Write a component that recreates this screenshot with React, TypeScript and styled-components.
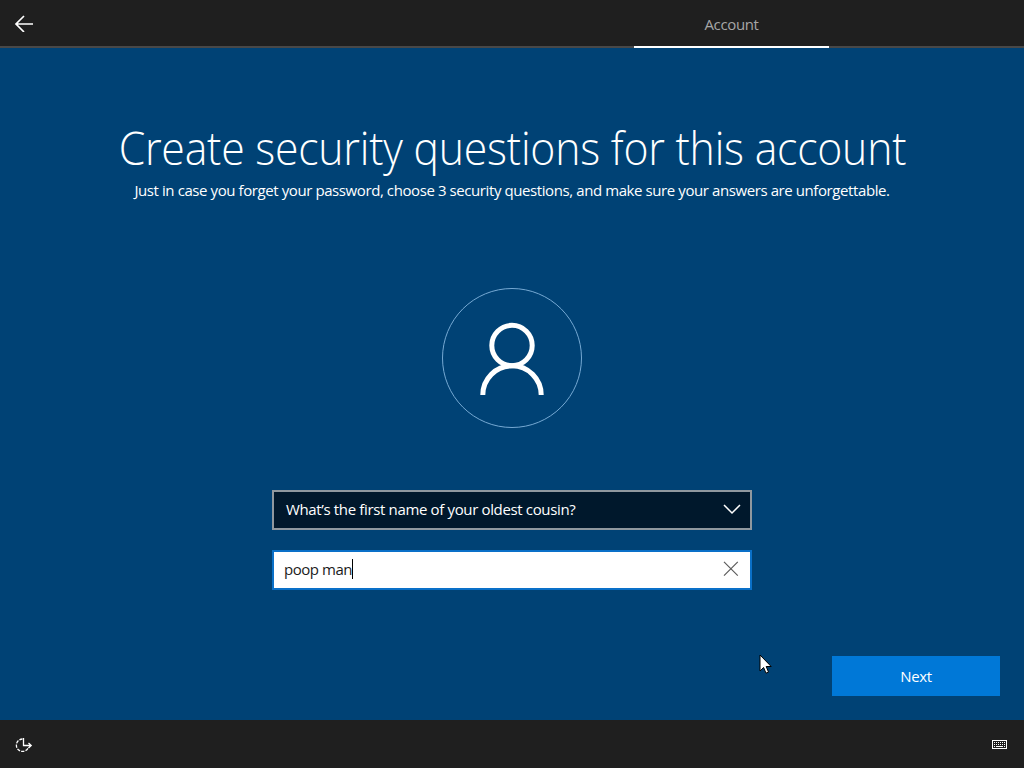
import React from 'react';
import styled, { createGlobalStyle } from 'styled-components';

const GlobalStyle = createGlobalStyle`
  * { box-sizing: border-box; }
  body {
    margin: 0;
    background: #004275;
    font-family: 'Open Sans', 'Noto Sans', sans-serif;
    font-size: 15px;
    letter-spacing: -0.35px;
    color: #fff;
    overflow: hidden;
  }
`;

const Screen = styled.div`
  width: 1024px;
  height: 768px;
  display: flex;
  flex-direction: column;
  background: #004275;
`;

const TopBar = styled.header`
  height: 48px;
  flex: none;
  display: flex;
  justify-content: space-between;
  background: #1f1f1f;
  border-bottom: 2px solid #484848;
`;

const BackButton = styled.button`
  width: 48px;
  height: 46px;
  padding: 0;
  border: 0;
  background: none;
  display: flex;
  align-items: center;
  justify-content: center;
`;

const Tab = styled.div`
  width: 195px;
  height: 48px;
  margin-right: 195px;
  padding-top: 14px;
  border-bottom: 2px solid #fff;
  text-align: center;
  line-height: 20px;
  color: #a6a6a6;
`;

const Content = styled.main`
  flex: 1;
  display: flex;
  flex-direction: column;
  align-items: center;
  padding: 67px 24px 24px;
`;

const Title = styled.h1`
  margin: 0;
  font-size: 46px;
  font-weight: 300;
  line-height: 64px;
  letter-spacing: -0.25px;
  white-space: nowrap;
  transform: scaleX(0.93);
`;

const Subtitle = styled.p`
  margin: 0;
  padding-top: 1px;
  line-height: 20px;
  letter-spacing: -0.41px;
  white-space: nowrap;
`;

const Avatar = styled.div`
  width: 140px;
  height: 140px;
  margin-top: 88px;
  border: 1px solid #76a9d3;
  border-radius: 50%;
`;

const Form = styled.form`
  width: 480px;
  margin-top: 62px;
  display: flex;
  flex-direction: column;
  gap: 20px;
`;

const Field = styled.div<{ $kind: 'select' | 'input' }>`
  height: 40px;
  display: flex;
  align-items: center;
  justify-content: space-between;
  padding: 0 9px 2px ${p => (p.$kind === 'select' ? 12 : 10)}px;
  border: 2px solid ${p => (p.$kind === 'select' ? '#8f989f' : '#0a70c8')};
  background: ${p => (p.$kind === 'select' ? '#00182c' : '#fff')};
  color: ${p => (p.$kind === 'select' ? '#fff' : '#1b1b1b')};
  letter-spacing: ${p => (p.$kind === 'select' ? '-0.35px' : '-0.45px')};
`;

const Value = styled.span`
  display: flex;
  align-items: center;
  line-height: 20px;
  white-space: pre;
`;

const Caret = styled.i`
  width: 1px;
  height: 20px;
  background: #000;
`;

const NextButton = styled.button`
  width: 168px;
  height: 40px;
  margin-top: auto;
  align-self: flex-end;
  border: 0;
  padding: 0;
  background: #0078d7;
  color: #fff;
  font: inherit;
  letter-spacing: inherit;
`;

const BottomBar = styled.footer`
  height: 48px;
  flex: none;
  display: flex;
  align-items: center;
  justify-content: space-between;
  padding: 1px 15px 0;
  background: #1f1f1f;
`;

const Pointer = styled.svg`
  position: absolute;
  left: 759px;
  top: 654px;
`;

const Icon = styled.svg`
  display: block;
  flex: none;
  fill: none;
`;

const KEY_COLUMNS = [3, 5, 7, 9, 11, 13];

export default function App() {
  return (
    <Screen>
      <GlobalStyle />
      <TopBar>
        <BackButton aria-label="Back">
          <Icon width="20" height="18" viewBox="0 0 20 18" stroke="#fff" strokeWidth="1.7">
            <path d="M19 10H2M10 2L2 10L10 18" />
          </Icon>
        </BackButton>
        <Tab>Account</Tab>
      </TopBar>
      <Content>
        <Title>Create security questions for this account</Title>
        <Subtitle>
          Just in case you forget your password, choose 3 security questions, and make sure your answers are
          unforgettable.
        </Subtitle>
        <Avatar>
          <Icon width="138" height="138" viewBox="0 0 138 138" stroke="#fff" strokeWidth="5">
            <circle cx="69" cy="56.5" r="20.2" />
            <path d="M39.800 106A29.200 29.200 0 0 1 98.200 106" />
          </Icon>
        </Avatar>
        <Form onSubmit={e => e.preventDefault()}>
          <Field $kind="select">
            <Value>What’s the first name of your oldest cousin?</Value>
            <Icon width="18" height="12" viewBox="0 0 18 12" stroke="#fff" strokeWidth="1.5">
              <path d="M1 2L9 10L17 2" />
            </Icon>
          </Field>
          <Field $kind="input">
            <Value>
              poop man
              <Caret />
            </Value>
            <Icon width="18" height="16" viewBox="0 0 18 16" stroke="#5c5c5c" strokeWidth="1.2">
              <path d="M1 0.800L14.800 14.600M14.800 0.800L1 14.600" />
            </Icon>
          </Field>
        </Form>
        <NextButton>Next</NextButton>
      </Content>
      <BottomBar>
        <Icon width="18" height="16" viewBox="0 0 18 16" stroke="#fff" strokeWidth="1.3">
          <path d="M7.500 2A6.200 6.200 0 1 0 13.500 10" strokeDasharray="3.2 1.200" />
          <path d="M8.500 1V8.500H16M13.500 6L16.200 8.500L13.500 11" />
        </Icon>
        <Icon width="18" height="10" viewBox="0 0 18 10" stroke="#fff">
          <rect x="1.500" y="0.500" width="14" height="8" />
          {KEY_COLUMNS.map(x => (
            <path key={x} d={`M${x} 2.500h1M${x} 4.500h1`} />
          ))}
          <path d="M3 6.500h1M5 6.500h7M13 6.500h1" />
        </Icon>
      </BottomBar>
      <Pointer width="14" height="21" viewBox="0 0 14 21">
        <path d="M1 1V17L4.600 13.500L7 19.200L9.500 18.100L7.200 12.500H12.200Z" fill="#fff" stroke="#000" strokeWidth="1" />
      </Pointer>
    </Screen>
  );
}
